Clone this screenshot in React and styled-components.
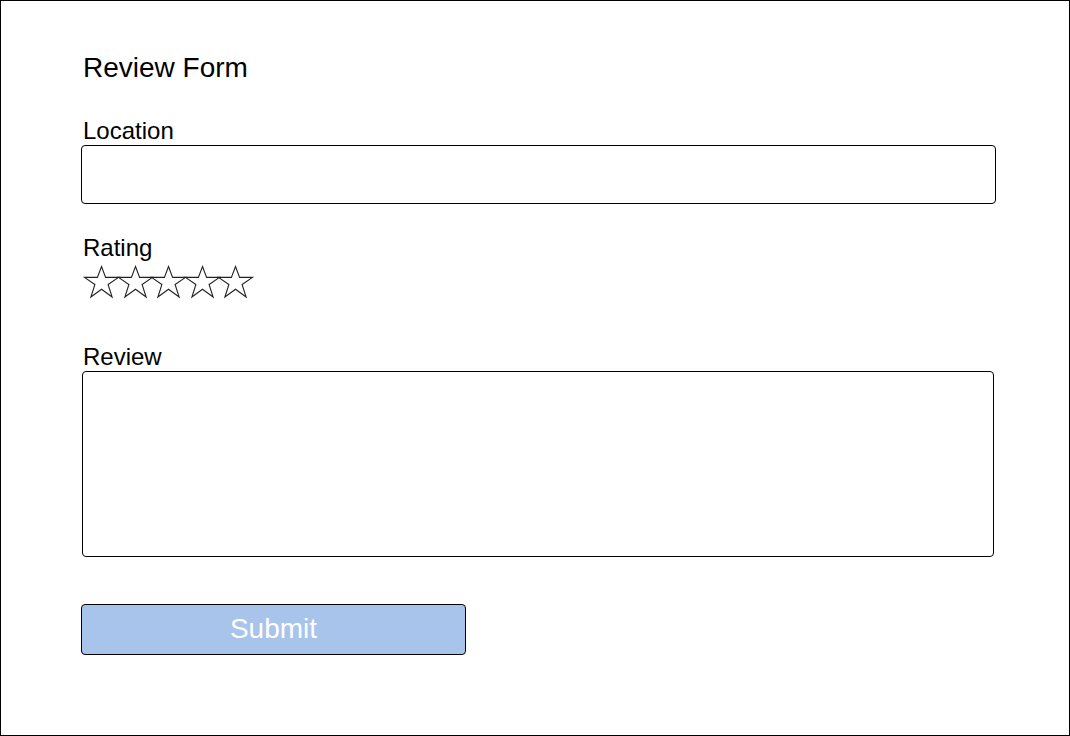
import React from 'react'
import styled, { createGlobalStyle } from 'styled-components'

const GlobalStyle = createGlobalStyle`
  html, body {
    margin: 0;
    padding: 0;
    background: #fff;
  }
  body {
    font-family: "Liberation Sans", Arial, sans-serif;
    color: #000;
  }
`;

const Frame = styled.div`
  width: 1070px;
  height: 736px;
  box-sizing: border-box;
  border: 1px solid #000;
  background: #fff;
  padding: 51px 0 0 80px;
  display: flex;
  flex-direction: column;
  align-items: flex-start;
`;

const Title = styled.h1`
  margin: 0 0 33px;
  padding-left: 2px;
  font-size: 28px;
  line-height: 32px;
  font-weight: normal;
`;

const Label = styled.label`
  display: block;
  padding-left: 2px;
  font-size: 24px;
  line-height: 28px;
  margin-top: ${props => props.top || 0}px;
`;

const TextInput = styled.input`
  display: block;
  box-sizing: border-box;
  width: 915px;
  height: 59px;
  margin: 0;
  padding: 0 10px;
  border: 1px solid #000;
  border-radius: 4px;
  background: #fff;
  font: inherit;
  outline: none;
`;

const TextArea = styled.textarea`
  display: block;
  box-sizing: border-box;
  width: 912px;
  height: 186px;
  margin: 0 0 0 1px;
  padding: 8px 10px;
  border: 1px solid #000;
  border-radius: 4px;
  background: #fff;
  font: inherit;
  resize: none;
  outline: none;
`;

const Stars = styled.div`
  display: flex;
  margin: 4px 0 0 3px;
  height: 32px;
`;

const StarIcon = styled.svg`
  width: 35px;
  height: 32px;
  flex: none;
  overflow: visible;
  & + & {
    margin-left: -1.5px;
  }
`;

const SubmitButton = styled.button`
  box-sizing: border-box;
  width: 385px;
  height: 51px;
  margin-top: 47px;
  padding: 0 0 2px;
  border: 1px solid #000;
  border-radius: 4px;
  background: #a9c4eb;
  color: #fff;
  font-family: "Liberation Sans", Arial, sans-serif;
  font-size: 28px;
  line-height: 1;
  cursor: pointer;
`;

const Star = () => (
  <StarIcon viewBox="0 0 35 32">
    <polygon
      points="17.5,0.5 21.6,11.4 34.5,11.4 24.1,18.5 28.1,31 17.5,23.3 6.9,31 10.9,18.5 0.5,11.4 13.4,11.4"
      fill="none"
      stroke="#222"
      strokeWidth="1.1"
      strokeLinejoin="miter"
    />
  </StarIcon>
)

const App = () => (
  <>
    <GlobalStyle />
    <Frame>
      <Title>Review Form</Title>

      <Label htmlFor="location">Location</Label>
      <TextInput id="location" type="text" />

      <Label top={30}>Rating</Label>
      <Stars>
        {[1, 2, 3, 4, 5].map(n => <Star key={n} />)}
      </Stars>

      <Label htmlFor="review" top={45}>Review</Label>
      <TextArea id="review" />

      <SubmitButton type="button">Submit</SubmitButton>
    </Frame>
  </>
)

export default App;
